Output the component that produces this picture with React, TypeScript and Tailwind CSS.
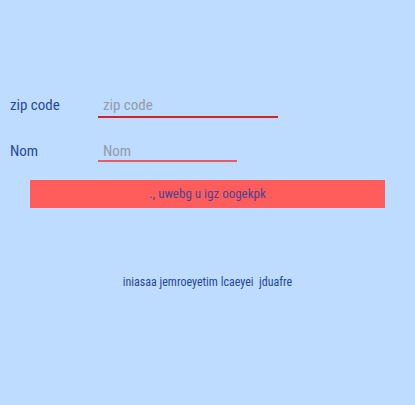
export default function App() {
  return (
    <div className="min-h-screen bg-[#bedcff] pt-[94px] font-['Roboto_Condensed','Arial_Narrow','Liberation_Sans_Narrow',sans-serif] text-[#27479b]">
      <form onSubmit={(event) => event.preventDefault()}>
        <div className="flex px-[10px]">
          <label htmlFor="zip" className="w-[88px] text-[15px] leading-[22px]">
            zip code
          </label>
          <input
            id="zip"
            type="text"
            placeholder="zip code"
            className="h-[24px] w-[180px] border-b-2 border-[#d3222a] bg-transparent px-[5px] text-[15px] leading-[22px] outline-none placeholder:text-[#929ba6]"
          />
        </div>
        <div className="mt-[24px] flex px-[10px]">
          <label htmlFor="nom" className="w-[88px] text-[15px] leading-[18px]">
            Nom
          </label>
          <input
            id="nom"
            type="text"
            placeholder="Nom"
            className="h-[20px] w-[139px] border-b-2 border-[#e95a62] bg-transparent px-[5px] text-[15px] leading-[18px] outline-none placeholder:text-[#929ba6]"
          />
        </div>
        <div className="mt-[18px] px-[30px]">
          <button type="submit" className="block h-[28px] w-full bg-[#ff5c5c] text-[13px] leading-[28px] text-[#4d4494]">
            ., uwebg u igz oogekpk
          </button>
        </div>
      </form>
      <p className="mt-[64px] whitespace-pre text-center text-[12px] leading-[20px]">
        {"iniasaa jemroeyetim lcaeyei  jduafre"}
      </p>
    </div>
  );
}
